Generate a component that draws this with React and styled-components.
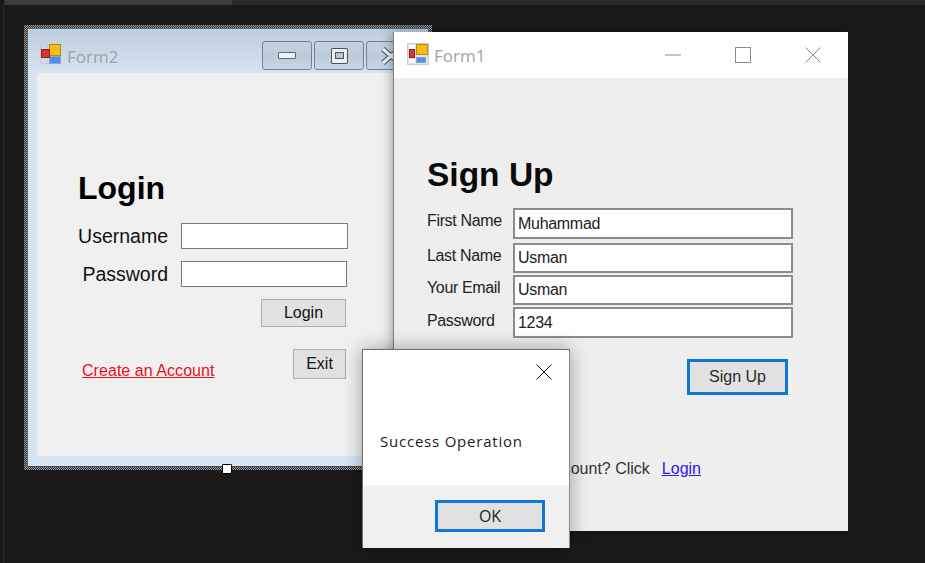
import React from "react";
import styled, { createGlobalStyle } from "styled-components";

const GlobalStyle = createGlobalStyle`
  html, body {
    margin: 0;
    padding: 0;
    background: #1a1a1a;
  }
  * {
    box-sizing: border-box;
  }
`;

const Desktop = styled.div`
  position: relative;
  width: 925px;
  height: 563px;
  overflow: hidden;
  background: #1a1a1a;
  font-family: "Liberation Sans", Arial, sans-serif;
  color: #111;
`;

const TopStrip = styled.div`
  display: flex;
  height: 5px;
  margin-left: 4px;
  background: #2a2a2a;
  border-left: 1px solid #333;
`;

const TopTab = styled.div`
  width: 227px;
  background: #3c3c3c;
`;

const SideLine = styled.div`
  position: absolute;
  left: 3px;
  top: 5px;
  bottom: 0;
  width: 1px;
  background: #2c2c2c;
`;

// designer selection frame round Form2
const SelectionFrame = styled.div`
  position: absolute;
  left: 24px;
  top: 25px;
  width: 408px;
  height: 445px;
  padding: 3px;
  background: repeating-conic-gradient(#a0a0a0 0 25%, #2a2a2a 0 50%) 0 0 / 2px 2px;
`;

const Handle = styled.div`
  position: absolute;
  left: 222px;
  top: 464px;
  width: 10px;
  height: 10px;
  background: #fff;
  border: 1px solid #000;
  border-radius: 1px;
`;

const Form2Window = styled.div`
  display: flex;
  flex-direction: column;
  height: 100%;
  padding: 0 9px 10px;
  background: #d7e4f2;
  border: 1px solid #5c6670;
  border-bottom-color: #44494e;
  border-radius: 5px 5px 0 0;
`;

const Form2Bar = styled.div`
  display: flex;
  align-items: flex-start;
  height: 44px;
  margin: 0 -9px;
  padding: 12px 0 0 12px;
  background: linear-gradient(#bdcddc, #d6e4f2);
  flex-shrink: 0;
`;

const IconSlot = styled.div`
  display: flex;
  margin-top: ${(p) => p.$top || 0}px;
`;

const TitleText = styled.span`
  margin-left: ${(p) => p.$gap}px;
  margin-top: ${(p) => p.$top || 0}px;
  font-family: "Open Sans", sans-serif;
  font-size: 17px;
  line-height: 30px;
  color: #9ba3ab;
`;

const AeroButtons = styled.div`
  display: flex;
  gap: 2px;
  margin-left: 144px;
`;

const AeroButton = styled.div`
  display: flex;
  align-items: center;
  justify-content: center;
  width: 50px;
  height: 29px;
  background: linear-gradient(#c5d3e1, #bccbda 50%, #c6d6e6);
  border: 1px solid #6f8296;
  border-radius: 3px;
`;

const MinGlyph = styled.div`
  width: 18px;
  height: 7px;
  background: #eef2f6;
  border: 1px solid #5c6772;
  border-radius: 1px;
`;

const MaxGlyph = styled.div`
  display: flex;
  width: 17px;
  height: 16px;
  padding: 3px 3px 4px;
  background: #eef2f6;
  border: 1px solid #4a535c;
  border-radius: 1px;
`;

const MaxGlyphInner = styled.div`
  flex: 1;
  background: #b9c8d7;
  border: 1px solid #4a535c;
`;

const Form2Client = styled.div`
  flex: 1;
  padding: 97px 0 0 41px;
  background: #f0f0f0;
`;

const LoginHeading = styled.h1`
  margin: 0 0 16px;
  font-size: 32px;
  line-height: 37px;
  font-weight: 700;
  color: #000;
`;

const LoginRow = styled.div`
  display: flex;
  align-items: center;
  width: 270px;
  margin-bottom: 12px;
`;

const LoginLabel = styled.label`
  width: 90px;
  margin-right: 13px;
  font-size: 19.5px;
  line-height: 26px;
  text-align: right;
  white-space: nowrap;
  color: #111;
`;

const LoginInput = styled.div`
  width: ${(p) => p.$w}px;
  height: 26px;
  background: #fff;
  border: 1px solid #7a7a7a;
`;

const FlatButton = styled.div`
  display: flex;
  align-items: center;
  justify-content: center;
  width: ${(p) => p.$w}px;
  height: ${(p) => p.$h}px;
  background: #e1e1e1;
  border: 1px solid #adadad;
  font-size: 16px;
  color: #111;
`;

const LoginActions = styled.div`
  display: flex;
  justify-content: flex-end;
  width: 268px;
`;

const LoginFooter = styled.div`
  display: flex;
  justify-content: space-between;
  align-items: flex-start;
  width: 264px;
  margin: 22px 0 0 4px;
`;

const RedLink = styled.a`
  margin-top: 13px;
  font-size: 16px;
  line-height: 18px;
  letter-spacing: 0.05px;
  color: #e8101c;
  text-decoration: underline;
`;

const Form1Window = styled.div`
  position: absolute;
  left: 393px;
  top: 32px;
  display: flex;
  flex-direction: column;
  width: 455px;
  height: 499px;
  background: #eeeeee;
  border-left: 1px solid #7f7f7f;
  box-shadow: -2px 0 10px rgba(0, 0, 0, 0.3);
`;

const Form1Bar = styled.div`
  display: flex;
  align-items: center;
  height: 46px;
  padding-left: 13px;
  background: #fff;
  flex-shrink: 0;
`;

const WinControls = styled.div`
  display: flex;
  align-items: center;
  margin-left: auto;
  color: #8a8a8a;
`;

const WinControl = styled.div`
  display: flex;
  align-items: center;
  justify-content: center;
  width: 70px;
  height: 46px;
`;

const Form1Client = styled.div`
  flex: 1;
  padding: 78px 0 0 33px;
`;

const SignUpHeading = styled.h1`
  margin: 0 0 14px;
  font-size: 33.5px;
  line-height: 38px;
  font-weight: 700;
  color: #0a0a0a;
`;

const SignUpRow = styled.div`
  display: flex;
  align-items: center;
  margin-bottom: ${(p) => p.$gap}px;
`;

const SignUpLabel = styled.label`
  width: 86px;
  padding-bottom: ${(p) => p.$lift}px;
  font-size: 16px;
  line-height: 20px;
  letter-spacing: -0.35px;
  color: #222;
  white-space: nowrap;
`;

const SignUpInput = styled.div`
  display: flex;
  align-items: center;
  width: 280px;
  height: ${(p) => p.$h}px;
  padding-left: 3px;
  background: #fff;
  border: 2px solid #8c8c8c;
  font-size: 16px;
  letter-spacing: -0.3px;
  color: #222;
`;

const FocusButton = styled.div`
  display: flex;
  align-items: center;
  justify-content: center;
  width: ${(p) => p.$w}px;
  height: ${(p) => p.$h}px;
  background: #e1e1e1;
  border: 3px solid #0f78d4;
  font-size: 16px;
  color: #2a2a2a;
`;

const SignUpActions = styled.div`
  display: flex;
  justify-content: flex-end;
  width: 361px;
  margin-top: 21px;
`;

const AccountLine = styled.div`
  display: flex;
  justify-content: flex-end;
  width: 274px;
  margin-top: 64px;
  font-size: 16px;
  line-height: 20px;
  color: #333;
  white-space: nowrap;
`;

const BlueLink = styled.a`
  margin-left: 12px;
  color: #2a1ae8;
  text-decoration: underline;
`;

const Dialog = styled.div`
  position: absolute;
  left: 362px;
  top: 349px;
  display: flex;
  flex-direction: column;
  width: 208px;
  height: 199px;
  background: #fff;
  border: 1px solid #6f6f6f;
  border-bottom: none;
  border-right-color: #8a8a8a;
  box-shadow: 0 0 18px rgba(0, 0, 0, 0.35);
`;

const DialogClose = styled.div`
  display: flex;
  justify-content: flex-end;
  padding: 14px 17px 0 0;
  height: 62px;
  flex-shrink: 0;
`;

const DialogMessage = styled.div`
  flex: 1;
  padding: 19px 0 0 17px;
  font-family: "Open Sans", sans-serif;
  font-size: 15px;
  line-height: 20px;
  letter-spacing: 0.78px;
  color: #1a1a1a;
`;

const DialogFooter = styled.div`
  display: flex;
  justify-content: flex-end;
  height: 63px;
  padding: 15px 24px 0 0;
  background: #f0f0f0;
  flex-shrink: 0;
`;

const OkLabel = styled.span`
  font-family: "Open Sans", sans-serif;
  font-size: 16px;
  color: #222;
`;

function FormIcon({ framed }) {
  return (
    <svg width="22" height="22" viewBox="0 0 22 22">
      {framed ? (
        <rect x="0.5" y="0.5" width="21" height="21" fill="#e6e3dc" stroke="#cfcbc3" />
      ) : (
        <g stroke="#c8ccd2" fill="none">
          <path d="M0.5 1.5V20.5M7.5 1.5V20.5M0.5 1.5H9M0.5 7.5H9M0.5 20.5H9" />
        </g>
      )}
      {framed && <rect x="2" y="2" width="6" height="4" fill="#fff" />}
      {framed && <rect x="2" y="16" width="6" height="4" fill="#fff" />}
      {framed && <rect x="15" y="16" width="4" height="4" fill="#fff" />}
      <rect x="9.5" y="1.5" width="11" height={framed ? 10 : 11} fill="#f6bd16" stroke="#b98a12" />
      <rect x="9.5" y={framed ? 14.5 : 13.5} width={framed ? 9 : 11} height={framed ? 5 : 7} fill="#4f8fe6" stroke="#7fa9de" />
      <rect x={framed ? 2.5 : 1.5} y="6.5" width={framed ? 5 : 8} height="8" fill="#d8362f" stroke="#8d1f1c" />
    </svg>
  );
}

function CrossIcon({ size, color }) {
  return (
    <svg width={size} height={size} viewBox="0 0 16 16">
      <path d="M0.5 0.5L15.5 15.5M15.5 0.5L0.5 15.5" stroke={color} fill="none" />
    </svg>
  );
}

function LoginForm() {
  return (
    <SelectionFrame>
      <Form2Window>
        <Form2Bar>
          <IconSlot $top={2}>
            <FormIcon />
          </IconSlot>
          <TitleText $gap={5} $top={1}>Form2</TitleText>
          <AeroButtons>
            <AeroButton><MinGlyph /></AeroButton>
            <AeroButton><MaxGlyph><MaxGlyphInner /></MaxGlyph></AeroButton>
            <AeroButton>
              <svg width="20" height="18" viewBox="0 0 20 18">
                <path d="M2 2L18 16M18 2L2 16" stroke="#4a535c" strokeWidth="5" />
                <path d="M2 2L18 16M18 2L2 16" stroke="#f2f4f6" strokeWidth="3" />
              </svg>
            </AeroButton>
          </AeroButtons>
        </Form2Bar>
        <Form2Client>
          <LoginHeading>Login</LoginHeading>
          <LoginRow>
            <LoginLabel>Username</LoginLabel>
            <LoginInput $w={167} />
          </LoginRow>
          <LoginRow>
            <LoginLabel>Password</LoginLabel>
            <LoginInput $w={166} />
          </LoginRow>
          <LoginActions>
            <FlatButton $w={85} $h={28}>Login</FlatButton>
          </LoginActions>
          <LoginFooter>
            <RedLink>Create an Account</RedLink>
            <FlatButton $w={53} $h={30}>Exit</FlatButton>
          </LoginFooter>
        </Form2Client>
      </Form2Window>
    </SelectionFrame>
  );
}

function SignUpForm() {
  return (
    <Form1Window>
      <Form1Bar>
        <IconSlot $top={-2}>
          <FormIcon framed />
        </IconSlot>
        <TitleText $gap={5} $top={2}>Form1</TitleText>
        <WinControls>
          <WinControl>
            <svg width="16" height="2" viewBox="0 0 16 2"><path d="M0 1H16" stroke="#8a8a8a" /></svg>
          </WinControl>
          <WinControl>
            <svg width="16" height="16" viewBox="0 0 16 16">
              <rect x="0.5" y="0.5" width="15" height="15" fill="none" stroke="#8a8a8a" />
            </svg>
          </WinControl>
          <WinControl>
            <CrossIcon size={16} color="#8a8a8a" />
          </WinControl>
        </WinControls>
      </Form1Bar>
      <Form1Client>
        <SignUpHeading>Sign Up</SignUpHeading>
        <SignUpRow $gap={4}>
          <SignUpLabel $lift={6}>First Name</SignUpLabel>
          <SignUpInput $h={31}>Muhammad</SignUpInput>
        </SignUpRow>
        <SignUpRow $gap={2}>
          <SignUpLabel $lift={4}>Last Name</SignUpLabel>
          <SignUpInput $h={30}>Usman</SignUpInput>
        </SignUpRow>
        <SignUpRow $gap={2}>
          <SignUpLabel $lift={4}>Your Email</SignUpLabel>
          <SignUpInput $h={30}>Usman</SignUpInput>
        </SignUpRow>
        <SignUpRow $gap={0}>
          <SignUpLabel $lift={4}>Password</SignUpLabel>
          <SignUpInput $h={31}>1234</SignUpInput>
        </SignUpRow>
        <SignUpActions>
          <FocusButton $w={101} $h={36}>Sign Up</FocusButton>
        </SignUpActions>
        <AccountLine>
          Already have an account? Click
          <BlueLink>Login</BlueLink>
        </AccountLine>
      </Form1Client>
    </Form1Window>
  );
}

function SuccessDialog() {
  return (
    <Dialog>
      <DialogClose>
        <CrossIcon size={16} color="#111" />
      </DialogClose>
      <DialogMessage>Success Operation</DialogMessage>
      <DialogFooter>
        <FocusButton $w={110} $h={32}>
          <OkLabel>OK</OkLabel>
        </FocusButton>
      </DialogFooter>
    </Dialog>
  );
}

export default function App() {
  return (
    <Desktop>
      <GlobalStyle />
      <TopStrip>
        <TopTab />
      </TopStrip>
      <SideLine />
      <LoginForm />
      <Handle />
      <SignUpForm />
      <SuccessDialog />
    </Desktop>
  );
}
